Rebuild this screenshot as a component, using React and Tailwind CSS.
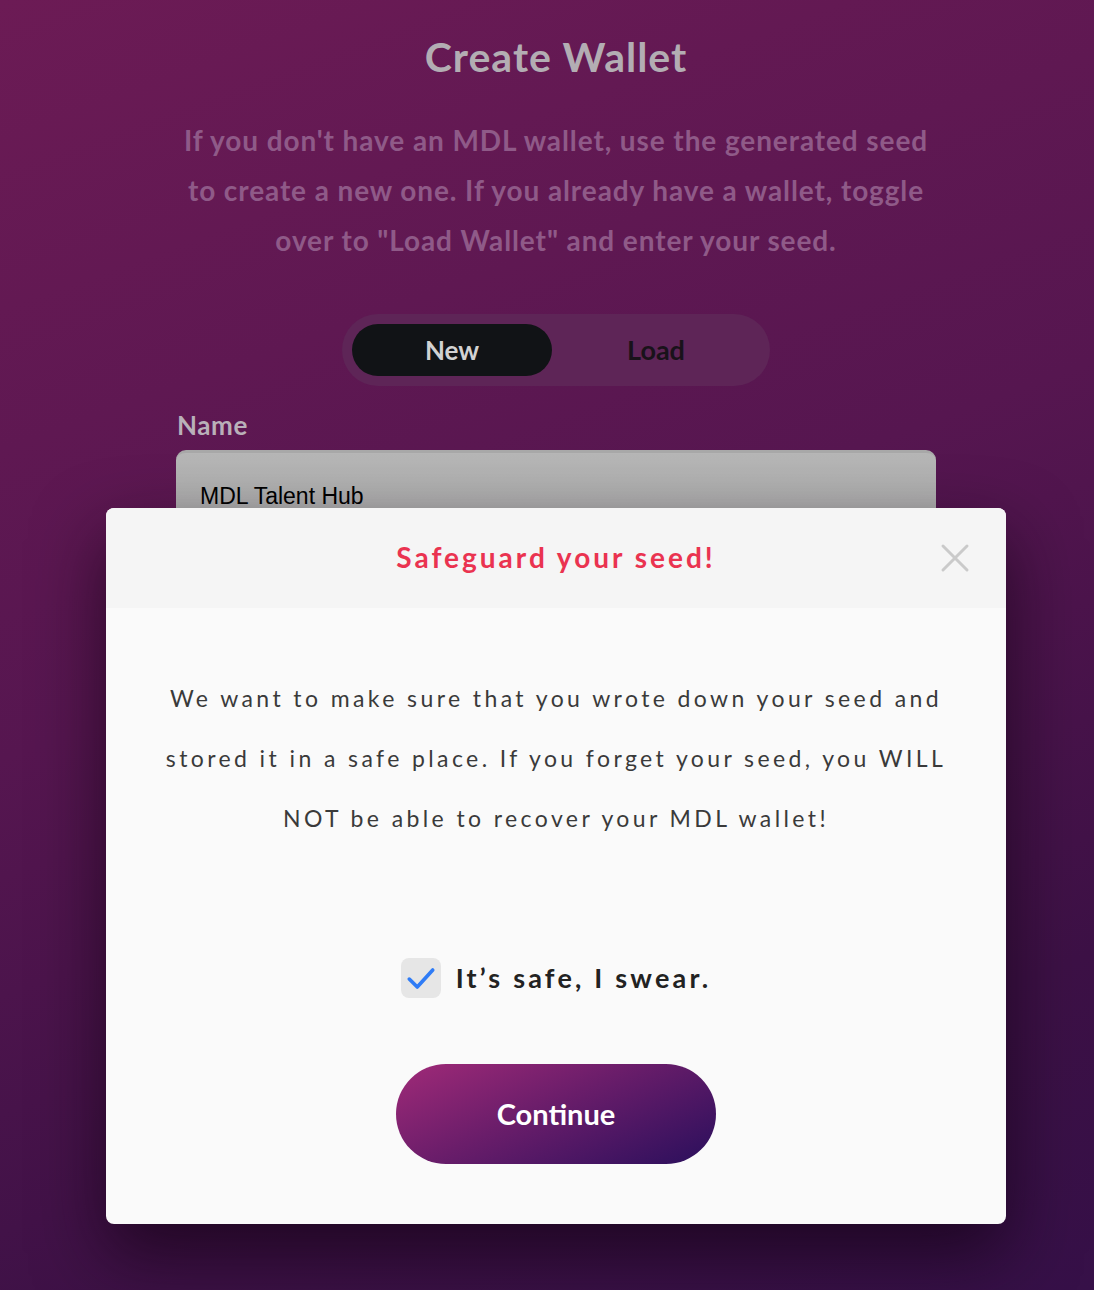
import React from "react";

function CheckIcon() {
  return (
    <svg width="32" height="32" viewBox="0 0 30 30" fill="none">
      <path d="M4 16 L11.5 23.5 L26 7.5" stroke="#2f7cf6" strokeWidth="3.4" strokeLinecap="round" strokeLinejoin="round" />
    </svg>
  );
}

function CloseIcon() {
  return (
    <svg width="30" height="30" viewBox="0 0 30 30" fill="none">
      <path d="M3 3 L27 27 M27 3 L3 27" stroke="#cacaca" strokeWidth="3" strokeLinecap="round" />
    </svg>
  );
}

export default function App() {
  return (
    <div
      className="relative w-[1094px] h-[1290px] overflow-hidden bg-[linear-gradient(160deg,#6c1b55_0%,#561650_45%,#3d1146_80%,#361048_100%)]"
      style={{ fontFamily: "Lato, 'Noto Sans', sans-serif" }}
    >
      <div className="flex flex-col items-center pt-[34px] pl-[18px]">
        <h1 className="text-[41px] leading-[46px] font-bold text-[#b3adb3] tracking-[1px]">Create Wallet</h1>
        <p className="mt-[35px] w-[770px] text-center text-[28px] leading-[50px] font-bold text-[#8f5a88] tracking-[0.9px]">
          If you don't have an MDL wallet, use the generated seed to create a new one. If you already have a wallet, toggle over to "Load Wallet" and enter your seed.
        </p>
        <div className="mt-[49px] flex items-center w-[428px] h-[72px] rounded-full bg-[#5e2557] p-[10px]">
          <div className="w-[200px] h-[52px] rounded-full bg-[#111316] flex items-center justify-center text-[26px] font-bold text-[#d2d2d2]">New</div>
          <div className="flex-1 flex items-center justify-center text-[27px] font-bold text-[#19121a]">Load</div>
        </div>
        <div className="w-[760px] mt-[24px]">
          <div className="text-[26px] leading-[30px] font-bold text-[#b9b0b9] pl-[1px] tracking-[0.6px]">Name</div>
          <div className="mt-[10px] h-[90px] rounded-[10px] bg-[linear-gradient(180deg,#b6b6b6,#a9a9a9)] border-t-[3px] border-[#a8a8a8] pl-[24px] pt-[26px] text-[23px] text-black" style={{ fontFamily: "'Liberation Sans', Arial, sans-serif" }}>
            MDL Talent Hub
          </div>
        </div>
      </div>

      <div className="absolute left-[106px] top-[508px] w-[900px] h-[716px] rounded-[8px] bg-[#fafafa] overflow-hidden shadow-[0_30px_70px_rgba(15,0,15,0.65)] flex flex-col">
        <div className="relative h-[100px] bg-[#f5f5f5] flex items-center justify-center">
          <span className="text-[28px] font-bold text-[#ea3350] tracking-[3px] pb-[2px]">Safeguard your seed!</span>
          <div className="absolute right-[36px] top-[35px]">
            <CloseIcon />
          </div>
        </div>
        <div className="flex flex-col items-center pt-[60px]">
          <p className="w-[790px] text-center text-[23px] leading-[60px] text-[#3a3a3a] tracking-[3.4px]">
            We want to make sure that you wrote down your seed and stored it in a safe place. If you forget your seed, you WILL NOT be able to recover your MDL wallet!
          </p>
          <div className="mt-[110px] flex items-center gap-[15px]">
            <div className="w-[40px] h-[40px] rounded-[8px] bg-[#e6e6e6] flex items-center justify-center">
              <CheckIcon />
            </div>
            <span className="text-[27px] font-bold text-[#222] tracking-[3.2px]">It’s safe, I swear.</span>
          </div>
          <button className="mt-[65px] w-[320px] h-[100px] rounded-full bg-[linear-gradient(155deg,#a02a78_0%,#6a1d6a_45%,#2a0f5c_100%)] text-white text-[29px] font-bold">
            Continue
          </button>
        </div>
      </div>
    </div>
  );
}
